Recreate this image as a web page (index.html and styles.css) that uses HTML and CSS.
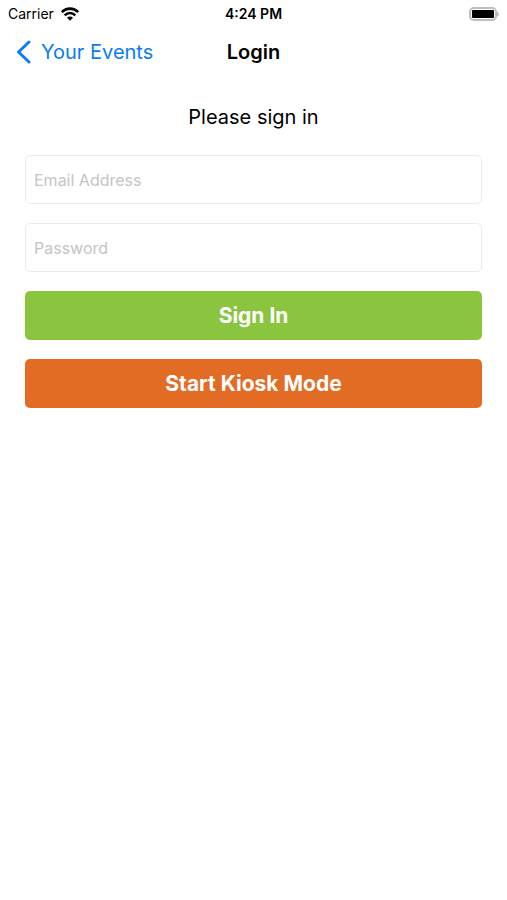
FILE: index.html
```html
<!DOCTYPE html>
<html lang="en">
<head>
  <meta charset="UTF-8" />
  <meta name="viewport" content="width=device-width, initial-scale=1.0" />
  <title>Login</title>
  <link rel="stylesheet" href="styles.css">
</head>
<body>

<div class="status-bar">
  <div class="carrier">
    <span>Carrier</span>
    <svg class="wifi" width="20" height="14" viewBox="0 0 20 14" aria-hidden="true">
      <path d="M1.8 5.1 C6.4 0.4 13.6 0.4 18.2 5.1" />
      <path d="M4.7 8.3 C7.7 5.3 12.3 5.3 15.3 8.3" />
      <path class="dot" d="M10 13.8 L7 10.8 C8.7 9.1 11.3 9.1 13 10.8 Z" />
    </svg>
  </div>
  <time class="clock">4:24 PM</time>
  <svg class="battery" width="30" height="14" viewBox="0 0 30 14" aria-hidden="true">
    <rect class="shell" x="1" y="1" width="26" height="12" rx="4" />
    <rect x="3" y="3" width="22" height="8" rx="1" />
    <path class="cap" d="M28 4.5 Q30 5 30 7 Q30 9 28 9.5 Z" />
  </svg>
</div>

<header class="nav-bar">
  <a href="#" class="back">
    <svg width="15" height="24" viewBox="0 0 15 24" aria-hidden="true">
      <path d="M13 2 L2.5 12 L13 22" />
    </svg>
    <span>Your Events</span>
  </a>
  <h1>Login</h1>
</header>

<main>
  <form class="login-form">
    <h2>Please sign in</h2>
    <input type="email" placeholder="Email Address" aria-label="Email Address">
    <input type="password" placeholder="Password" aria-label="Password">
    <button type="submit" class="sign-in">Sign In</button>
    <button type="button" class="kiosk">Start Kiosk Mode</button>
  </form>
</main>

</body>
</html>
```

FILE: styles.css
```css
:root {
  --blue: #0a7cf5;
  --green: #8bc53f;
  --orange: #e36c25;
  --border: #ebebeb;
  --placeholder: #c4c4c6;
}

* {
  margin: 0;
  padding: 0;
  box-sizing: border-box;
  font-family: Inter, sans-serif;
}

body {
  background: #fff;
  color: #000;
}

.status-bar {
  display: grid;
  grid-template-columns: 1fr auto 1fr;
  align-items: center;
  height: 27px;
  padding: 0 8px;
  font-size: 14px;
}

.carrier {
  display: flex;
  align-items: center;
  gap: 6px;
}

.wifi path {
  fill: none;
  stroke: #000;
  stroke-width: 2.6;
}

.wifi .dot {
  fill: #000;
  stroke: none;
}

.clock {
  font-size: 14px;
  font-weight: 600;
}

.battery {
  justify-self: end;
}

.battery .shell {
  fill: none;
  stroke: #bdbdbd;
  stroke-width: 2;
}

.battery .cap {
  fill: #bdbdbd;
}

.nav-bar {
  display: grid;
  grid-template-columns: 1fr auto 1fr;
  align-items: center;
  height: 50px;
  padding: 0 16px;
}

.nav-bar h1 {
  font-size: 20px;
  font-weight: 600;
}

.back {
  display: flex;
  align-items: center;
  gap: 10px;
  color: var(--blue);
  font-size: 20px;
  text-decoration: none;
  white-space: nowrap;
}

.back path {
  fill: none;
  stroke: var(--blue);
  stroke-width: 3;
  stroke-linecap: round;
  stroke-linejoin: round;
}

.login-form {
  display: flex;
  flex-direction: column;
  gap: 19px;
  padding: 26px 25px;
}

.login-form h2 {
  margin-bottom: 5px;
  font-size: 20px;
  font-weight: 400;
  line-height: 28px;
  text-align: center;
}

.login-form input {
  width: 100%;
  height: 49px;
  padding: 0 8px;
  border: 1px solid var(--border);
  border-radius: 5px;
  background: #fff;
  font-size: 16px;
}

.login-form input::placeholder {
  color: var(--placeholder);
}

.login-form button {
  height: 49px;
  border: none;
  border-radius: 5px;
  color: #fff;
  font-size: 21px;
  font-weight: 700;
  cursor: pointer;
}

.sign-in {
  background: var(--green);
}

.kiosk {
  background: var(--orange);
}
```
